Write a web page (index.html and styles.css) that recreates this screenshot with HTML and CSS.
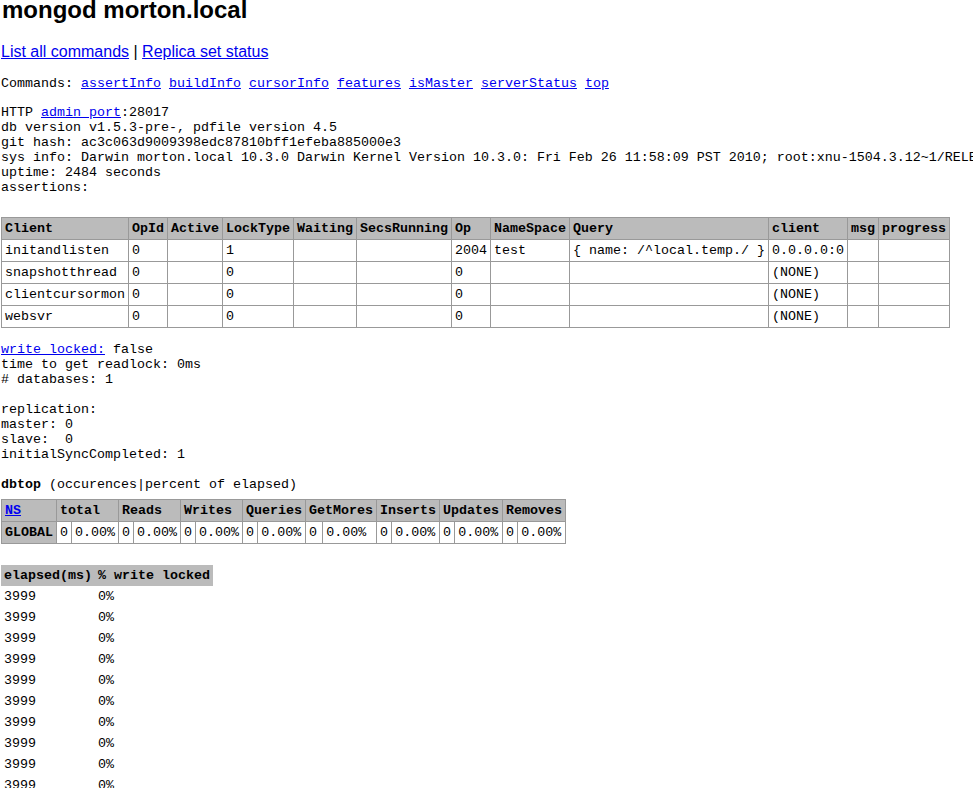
FILE: index.html
```html
<!DOCTYPE html>
<html>
<head>
<meta charset="utf-8">
<title>mongod morton.local</title>
<link rel="stylesheet" href="styles.css">
</head>
<body>
<h2 class="title">mongod morton.local</h2>
<p class="nav"><a href="#">List all commands</a> | <a href="#">Replica set status</a></p>
<pre class="mono cmds">Commands: <a href="#">assertInfo</a> <a href="#">buildInfo</a> <a href="#">cursorInfo</a> <a href="#">features</a> <a href="#">isMaster</a> <a href="#">serverStatus</a> <a href="#">top</a></pre>
<pre class="mono info">HTTP <a href="#">admin port</a>:28017
db version v1.5.3-pre-, pdfile version 4.5
git hash: ac3c063d9009398edc87810bff1efeba885000e3
sys info: Darwin morton.local 10.3.0 Darwin Kernel Version 10.3.0: Fri Feb 26 11:58:09 PST 2010; root:xnu-1504.3.12~1/RELEASE_I386 i386 BOOST_LIB_VERSION=1_41
uptime: 2484 seconds
assertions:</pre>
<table class="grid ops">
<tr><th>Client</th><th>OpId</th><th>Active</th><th>LockType</th><th>Waiting</th><th>SecsRunning</th><th>Op</th><th>NameSpace</th><th>Query</th><th>client</th><th>msg</th><th>progress</th></tr>
<tr><td>initandlisten</td><td>0</td><td></td><td>1</td><td></td><td></td><td>2004</td><td>test</td><td>{ name: /^local.temp./ }</td><td>0.0.0.0:0</td><td></td><td></td></tr>
<tr><td>snapshotthread</td><td>0</td><td></td><td>0</td><td></td><td></td><td>0</td><td></td><td></td><td>(NONE)</td><td></td><td></td></tr>
<tr><td>clientcursormon</td><td>0</td><td></td><td>0</td><td></td><td></td><td>0</td><td></td><td></td><td>(NONE)</td><td></td><td></td></tr>
<tr><td>websvr</td><td>0</td><td></td><td>0</td><td></td><td></td><td>0</td><td></td><td></td><td>(NONE)</td><td></td><td></td></tr>
</table>
<pre class="mono locks"><a href="#">write locked:</a> false
time to get readlock: 0ms
# databases: 1

replication:
master: 0
slave:  0
initialSyncCompleted: 1

<b>dbtop</b> (occurences|percent of elapsed)</pre>
<table class="grid dbtop">
<tr><th><a href="#">NS</a></th><th colspan="2">total</th><th colspan="2">Reads</th><th colspan="2">Writes</th><th colspan="2">Queries</th><th colspan="2">GetMores</th><th colspan="2">Inserts</th><th colspan="2">Updates</th><th colspan="2">Removes</th></tr>
<tr><th>GLOBAL</th><td>0</td><td>0.00%</td><td>0</td><td>0.00%</td><td>0</td><td>0.00%</td><td>0</td><td>0.00%</td><td>0</td><td>0.00%</td><td>0</td><td>0.00%</td><td>0</td><td>0.00%</td><td>0</td><td>0.00%</td></tr>
</table>
<table class="elapsed">
<tr><th>elapsed(ms)</th><th>% write locked</th></tr>
<tr><td>3999</td><td>0%</td></tr>
<tr><td>3999</td><td>0%</td></tr>
<tr><td>3999</td><td>0%</td></tr>
<tr><td>3999</td><td>0%</td></tr>
<tr><td>3999</td><td>0%</td></tr>
<tr><td>3999</td><td>0%</td></tr>
<tr><td>3999</td><td>0%</td></tr>
<tr><td>3999</td><td>0%</td></tr>
<tr><td>3999</td><td>0%</td></tr>
<tr><td>3999</td><td>0%</td></tr>
<tr><td>3999</td><td>0%</td></tr>
<tr><td>3999</td><td>0%</td></tr>
</table>
</body>
</html>
```
FILE: styles.css
```css
html, body {
  overflow: hidden;
}
body {
  margin: 0;
  padding: 0 0 0 1px;
  background: #fff;
  color: #000;
  font-family: "Liberation Sans", Arial, Helvetica, sans-serif;
}
a {
  color: #0000ee;
}
.title {
  margin: 0;
  padding-left: 1px;
  font-size: 24px;
  line-height: 19px;
  font-weight: bold;
}
.nav {
  margin: 24px 0 0;
  font-size: 16px;
  line-height: 18px;
}
.mono,
table {
  font-family: "Liberation Mono", "Courier New", Courier, monospace;
  font-size: 13.333px;
  line-height: 15px;
}
pre {
  margin: 0;
  white-space: pre;
}
.cmds {
  margin-top: 15px;
}
.info {
  margin-top: 14px;
}
.locks {
  margin-top: 14px;
}
table {
  border-collapse: collapse;
}
th, td {
  padding: 3px;
  text-align: left;
  vertical-align: top;
  white-space: nowrap;
}
th {
  background: #bbb;
  font-weight: bold;
}
.grid {
  border: 1px solid #555;
}
.grid th, .grid td {
  border: 1px solid #999;
}
.ops {
  margin-top: 22px;
}
.dbtop {
  margin-top: 7px;
}
.elapsed {
  margin-top: 21px;
}
```
